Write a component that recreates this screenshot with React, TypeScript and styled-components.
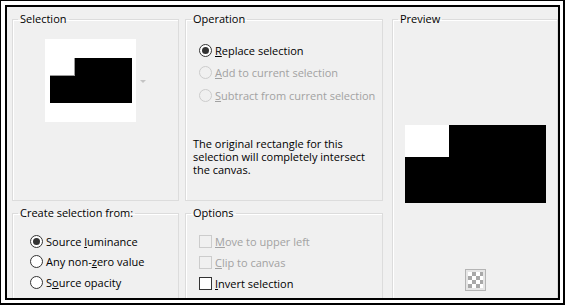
import React from "react";
import styled, { createGlobalStyle } from "styled-components";

const GlobalStyle = createGlobalStyle`
  body {
    margin: 0;
    background: #fff;
    font-family: "Open Sans", "Noto Sans", sans-serif;
    font-size: 11px;
    color: #000;
  }
`;

const Frame = styled.div`
  width: 565px;
  height: 305px;
  box-sizing: border-box;
  border: solid #000;
  border-width: 1px 2px 2px 1px;
  padding: 4px 3px 3px 4px;
  background: #fff;
`;

const Panel = styled.div`
  height: 100%;
  box-sizing: border-box;
  border: 2px solid #000;
  background: #f0f0f0;
  display: flex;
  padding: 5px 0 0 5px;
  overflow: hidden;
`;

const Column = styled.div<{ $width: number; $gap: number }>`
  width: ${(p) => p.$width}px;
  margin-right: ${(p) => p.$gap}px;
  display: flex;
  flex-direction: column;
  gap: 5px;
  flex-shrink: 0;
`;

const Group = styled.fieldset<{ $height: number }>`
  margin: 0;
  padding: 0;
  min-width: 0;
  flex-shrink: 0;
  height: ${(p) => p.$height}px;
  box-sizing: border-box;
  border: 1px solid #dcdcdc;
  box-shadow: inset 1px 1px 0 #fff;
`;

const Legend = styled.legend`
  margin-left: 5px;
  padding: 0 2px;
  line-height: 14px;
  font-size: 11px;
`;

const Body = styled.div<{ $top: number; $left: number }>`
  padding: ${(p) => p.$top}px 0 0 ${(p) => p.$left}px;
`;

const ThumbRow = styled.div`
  display: flex;
  align-items: center;
  gap: 4px;
`;

const Thumb = styled.div`
  width: 91px;
  height: 83px;
  background: #fff;
`;

const DropArrow = styled.span`
  width: 0;
  height: 0;
  border-left: 3px solid transparent;
  border-right: 3px solid transparent;
  border-top: 3px solid #c4c4c4;
  margin-top: 2px;
`;

const OptionList = styled.div<{ $indent: number }>`
  margin-left: ${(p) => p.$indent}px;
  display: flex;
  flex-direction: column;
`;

const OptionRow = styled.label<{ $height: number; $disabled?: boolean }>`
  height: ${(p) => p.$height}px;
  display: flex;
  align-items: center;
  gap: 3px;
  white-space: nowrap;
  color: ${(p) => (p.$disabled ? "#a2a2a2" : "#000")};
`;

const RadioMark = styled.span<{ $checked?: boolean; $disabled?: boolean }>`
  width: 13px;
  height: 13px;
  box-sizing: border-box;
  border-radius: 50%;
  border: 1px solid ${(p) => (p.$disabled ? "#cccccc" : "#333")};
  background: ${(p) => (p.$disabled ? "#f0f0f0" : "#fff")};
  display: flex;
  align-items: center;
  justify-content: center;
  flex-shrink: 0;

  &::after {
    content: "";
    width: 7px;
    height: 7px;
    border-radius: 50%;
    background: #333;
    display: ${(p) => (p.$checked ? "block" : "none")};
  }
`;

const CheckMark = styled.span<{ $disabled?: boolean }>`
  width: 13px;
  height: 13px;
  box-sizing: border-box;
  border: 1px solid ${(p) => (p.$disabled ? "#cccccc" : "#333")};
  background: ${(p) => (p.$disabled ? "#f0f0f0" : "#fff")};
  flex-shrink: 0;
`;

const Note = styled.p`
  margin: 30px 0 0;
  line-height: 13px;
  width: 180px;
`;

const PreviewBody = styled.div`
  display: flex;
  flex-direction: column;
  align-items: center;
  padding-top: 99px;
`;

const PreviewImage = styled.div`
  width: 141px;
  height: 78px;
  background: #000;
`;

const PreviewHole = styled.div`
  width: 44px;
  height: 32px;
  background: #fff;
`;

const CheckerButton = styled.div`
  margin-top: 66px;
  width: 21px;
  height: 22px;
  box-sizing: border-box;
  border: 1px solid #b4b4b4;
  background: #e6e6e6;
  padding: 2px;
`;

const Checker = styled.div`
  width: 15px;
  height: 16px;
  background-color: #fff;
  background-image: conic-gradient(
    #a8a8a8 0 25%,
    #fff 0 50%,
    #a8a8a8 0 75%,
    #fff 0
  );
  background-size: 8px 8px;
`;

export default function App() {
  return (
    <>
      <GlobalStyle />
      <Frame>
        <Panel>
          <Column $width={167} $gap={6}>
            <Group $height={189}>
              <Legend>Selection</Legend>
              <Body $top={13} $left={32}>
                <ThumbRow>
                  <Thumb>
                    <svg width="91" height="83" viewBox="0 0 91 83">
                      <rect x="5" y="37" width="82" height="27" fill="#000" />
                      <rect x="30" y="19" width="57" height="18" fill="#000" />
                      <line x1="5" y1="36.5" x2="30" y2="36.5" stroke="#9a9a9a" />
                      <line x1="29.5" y1="19" x2="29.5" y2="37" stroke="#9a9a9a" />
                    </svg>
                  </Thumb>
                  <DropArrow />
                </ThumbRow>
              </Body>
            </Group>
            <Group $height={100}>
              <Legend>Create selection from:</Legend>
              <Body $top={11} $left={17}>
                <OptionList $indent={0}>
                  <OptionRow $height={20.5}>
                    <RadioMark $checked />
                    <span>
                      Source <u>l</u>uminance
                    </span>
                  </OptionRow>
                  <OptionRow $height={20.5}>
                    <RadioMark />
                    <span>
                      Any non-<u>z</u>ero value
                    </span>
                  </OptionRow>
                  <OptionRow $height={20.5}>
                    <RadioMark />
                    <span>
                      S<u>o</u>urce opacity
                    </span>
                  </OptionRow>
                </OptionList>
              </Body>
            </Group>
          </Column>

          <Column $width={198} $gap={9}>
            <Group $height={189}>
              <Legend>Operation</Legend>
              <Body $top={13} $left={7}>
                <OptionList $indent={6}>
                  <OptionRow $height={22.5}>
                    <RadioMark $checked />
                    <span>
                      <u>R</u>eplace selection
                    </span>
                  </OptionRow>
                  <OptionRow $height={22.5} $disabled>
                    <RadioMark $disabled />
                    <span>
                      <u>A</u>dd to current selection
                    </span>
                  </OptionRow>
                  <OptionRow $height={22.5} $disabled>
                    <RadioMark $disabled />
                    <span>
                      <u>S</u>ubtract from current selection
                    </span>
                  </OptionRow>
                </OptionList>
                <Note>
                  The original rectangle for this selection will completely
                  intersect the canvas.
                </Note>
              </Body>
            </Group>
            <Group $height={100}>
              <Legend>Options</Legend>
              <Body $top={10.5} $left={13}>
                <OptionList $indent={0}>
                  <OptionRow $height={21} $disabled>
                    <CheckMark $disabled />
                    <span>
                      <u>M</u>ove to upper left
                    </span>
                  </OptionRow>
                  <OptionRow $height={21} $disabled>
                    <CheckMark $disabled />
                    <span>
                      <u>C</u>lip to canvas
                    </span>
                  </OptionRow>
                  <OptionRow $height={21}>
                    <CheckMark />
                    <span>
                      <u>I</u>nvert selection
                    </span>
                  </OptionRow>
                </OptionList>
              </Body>
            </Group>
          </Column>

          <Column $width={166} $gap={0}>
            <Group $height={300}>
              <Legend>Preview</Legend>
              <PreviewBody>
                <PreviewImage>
                  <PreviewHole />
                </PreviewImage>
                <CheckerButton>
                  <Checker />
                </CheckerButton>
              </PreviewBody>
            </Group>
          </Column>
        </Panel>
      </Frame>
    </>
  );
}
